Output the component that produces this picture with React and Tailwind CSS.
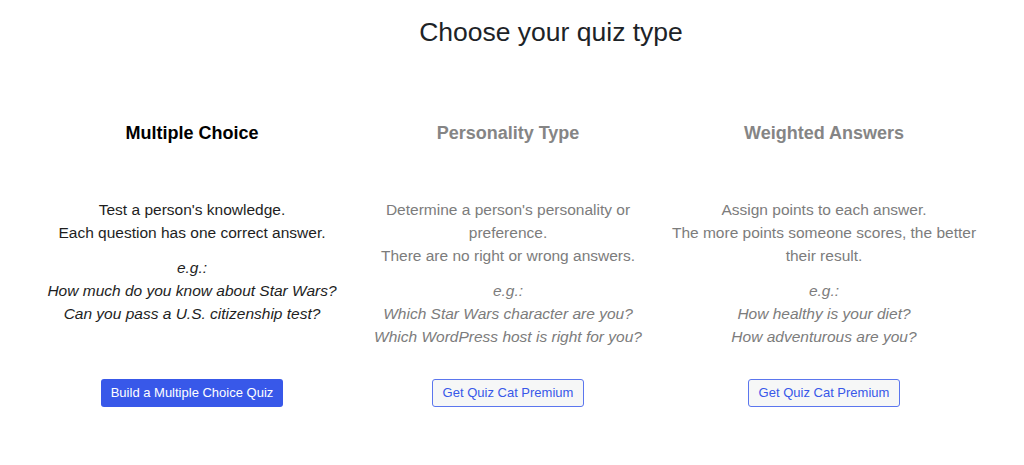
const quizTypes = [
    {
        title: 'Multiple Choice',
        active: true,
        lines: ["Test a person's knowledge.", 'Each question has one correct answer.'],
        examples: ['How much do you know about Star Wars?', 'Can you pass a U.S. citizenship test?'],
        button: 'Build a Multiple Choice Quiz',
    },
    {
        title: 'Personality Type',
        active: false,
        lines: ["Determine a person's personality or preference.", 'There are no right or wrong answers.'],
        examples: ['Which Star Wars character are you?', 'Which WordPress host is right for you?'],
        button: 'Get Quiz Cat Premium',
    },
    {
        title: 'Weighted Answers',
        active: false,
        lines: ['Assign points to each answer.', 'The more points someone scores, the better their result.'],
        examples: ['How healthy is your diet?', 'How adventurous are you?'],
        button: 'Get Quiz Cat Premium',
    },
];

const QuizCard = ({ quiz }) => {
    const text = quiz.active ? 'text-[#1e1e1e]' : 'text-[#7c7c7c]';
    return (
        <div className="flex flex-col items-center text-center">
            <h2 className={`text-[18px] leading-[24px] font-bold ${quiz.active ? 'text-black' : 'text-[#858585]'}`}>
                {quiz.title}
            </h2>
            <div className={`mt-[53px] h-[181px] text-[15.5px] leading-[23px] ${text}`}>
                {quiz.lines.map((line) => (
                    <p key={line}>{line}</p>
                ))}
                <div className="mt-3 italic">
                    <p>e.g.:</p>
                    {quiz.examples.map((ex) => (
                        <p key={ex}>{ex}</p>
                    ))}
                </div>
            </div>
            {quiz.active ? (
                <button className="h-[28px] px-[10px] rounded-[3px] bg-[#3858e9] text-white text-[13px]">
                    {quiz.button}
                </button>
            ) : (
                <button className="h-[28px] px-[10px] rounded-[3px] border border-[#5b76ee] bg-[#f6f7f7] text-[#3858e9] text-[13px]">
                    {quiz.button}
                </button>
            )}
        </div>
    );
};

export default function App() {
    return (
        <div className="h-[465px] w-full bg-white font-['Liberation_Sans',Arial,sans-serif]">
            <h1 className="pt-[15px] pl-[78px] text-center text-[26.5px] leading-[34px] text-[#1d2327]">
                Choose your quiz type
            </h1>
            {/* three columns */}
            <div className="mt-[72px] ml-[34px] grid w-[948px] grid-cols-3">
                {quizTypes.map((quiz) => (
                    <QuizCard key={quiz.title} quiz={quiz} />
                ))}
            </div>
        </div>
    );
}
